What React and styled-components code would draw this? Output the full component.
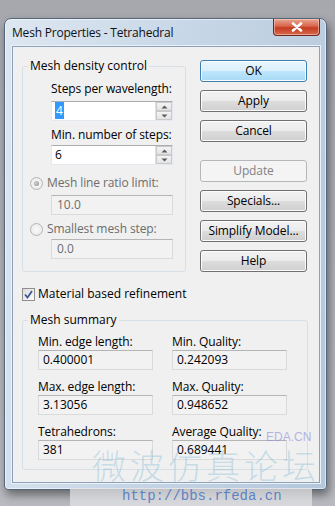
import React from 'react'
import styled, { createGlobalStyle } from 'styled-components'

const GlobalStyle = createGlobalStyle`
  html, body { margin: 0; padding: 0; }
  body {
    background: #aeb0b6;
    font-family: "Open Sans", "Noto Sans", sans-serif;
    font-size: 12px;
    color: #000;
  }
`

const Screen = styled.div`
  position: relative;
  width: 335px;
  height: 506px;
  overflow: hidden;
  box-sizing: border-box;
  padding: 18px 0 0 4px;
  background: linear-gradient(#a6a8ae, #b8bac0);
`

const Window = styled.div`
  width: 323px;
  height: 472px;
  box-sizing: border-box;
  border: 1px solid #56667a;
  border-radius: 7px 7px 4px 4px;
  background: linear-gradient(100deg, #dde7f1 0%, #c8d7e7 45%, #b4c7db 100%);
  box-shadow: inset 0 0 0 1px rgba(255, 255, 255, 0.55), 2px 5px 10px rgba(0, 0, 0, 0.45);
  padding: 0 6px 6px 7px;
  display: flex;
  flex-direction: column;
`

const TitleBar = styled.div`
  height: 27px;
  display: flex;
  justify-content: space-between;
  align-items: flex-start;
`

const Title = styled.div`
  font-size: 12px;
  line-height: 27px;
  color: #111;
  letter-spacing: -0.2px;
`

const CloseButton = styled.div`
  width: 47px;
  height: 17px;
  box-sizing: border-box;
  border: 1px solid #6e2a1f;
  border-top: none;
  border-radius: 0 0 4px 4px;
  background: linear-gradient(#e9a895 0%, #d7644b 45%, #c43c20 55%, #d66a4e 100%);
  box-shadow: inset 0 0 0 1px rgba(255, 220, 210, 0.5);
  display: flex;
  align-items: center;
  justify-content: center;
`

const Client = styled.div`
  flex: 1;
  box-sizing: border-box;
  background: #f0f0f0;
  border: 1px solid #8da2b8;
  box-shadow: 0 0 0 1px #eaf1f8;
  padding: 11px 0 0 9px;
  display: flex;
  flex-direction: column;
`

const TopRow = styled.div`
  display: flex;
  align-items: flex-start;
  gap: 14px;
`

const Group = styled.fieldset`
  margin: 0;
  box-sizing: border-box;
  width: ${p => p.$width}px;
  border: 1px solid #d5dfe5;
  border-radius: 3px;
  padding: ${p => p.$pad};
  display: flex;
  flex-direction: column;
  align-items: flex-start;
`

const Legend = styled.legend`
  padding: 0 2px;
  margin-left: 5px;
  line-height: 16px;
  font-size: 12px;
`

const Label = styled.div`
  line-height: 16px;
  margin: ${p => p.$m || 0};
  color: ${p => (p.$disabled ? '#6d6d6d' : '#000')};
  white-space: nowrap;
  letter-spacing: -0.1px;
`

const TextBox = styled.div`
  box-sizing: border-box;
  width: ${p => p.$w || 122}px;
  height: 20px;
  margin: ${p => p.$m || 0};
  display: flex;
  align-items: stretch;
  background: ${p => (p.$readonly ? '#f2f2f2' : '#fff')};
  border: 1px solid ${p => (p.$readonly ? '#dadada' : '#e3e9ef')};
  border-top-color: ${p => (p.$readonly ? '#b5b5b5' : '#abadb3')};
  color: ${p => (p.$disabled ? '#6d6d6d' : '#000')};
`

const Value = styled.div`
  flex: 1;
  padding-left: ${p => p.$pl || 3}px;
  line-height: 18px;
`

const Selected = styled.span`
  background: #3399ff;
  color: #fff;
  padding: 0 1px;
`

const Spin = styled.div`
  width: 16px;
  display: flex;
  flex-direction: column;
  border-left: 1px solid #e0e0e0;
`

const SpinHalf = styled.div`
  flex: 1;
  display: flex;
  align-items: center;
  justify-content: center;
  background: linear-gradient(#f4f4f4, #e3e3e3);
  border: 1px solid #c9c9c9;
`

const RadioRow = styled.div`
  display: flex;
  align-items: center;
  gap: 4px;
  margin: ${p => p.$m || 0};
  line-height: 16px;
  color: #6d6d6d;
  letter-spacing: -0.1px;
`

const RadioDot = styled.span`
  width: 13px;
  height: 13px;
  box-sizing: border-box;
  border-radius: 50%;
  border: 1px solid #b5b5b5;
  background: radial-gradient(circle, #fafafa 0%, #e6e6e6 100%);
  display: flex;
  align-items: center;
  justify-content: center;
  &::after {
    content: '';
    width: 5px;
    height: 5px;
    border-radius: 50%;
    background: ${p => (p.$checked ? 'radial-gradient(circle at 40% 40%, #d0d0d0, #8d8d8d)' : 'transparent')};
  }
`

const ButtonColumn = styled.div`
  display: flex;
  flex-direction: column;
  margin-top: 2px;
`

const Button = styled.div`
  width: 107px;
  height: 22px;
  box-sizing: border-box;
  margin-top: ${p => p.$gap || 0}px;
  border: 1px solid ${p => (p.$disabled ? '#b4b8bb' : p.$default ? '#3c7fb1' : '#707070')};
  border-radius: 3px;
  background: ${p =>
    p.$disabled
      ? '#f4f4f4'
      : p.$default
      ? 'linear-gradient(#eaf6fd 0%, #d9f0fc 50%, #bee6fd 50%, #a7d9f5 100%)'
      : 'linear-gradient(#f2f2f2 0%, #ebebeb 50%, #dddddd 50%, #cfcfcf 100%)'};
  box-shadow: inset 0 0 0 1px ${p => (p.$disabled ? '#f4f4f4' : '#fcfcfc')};
  color: ${p => (p.$disabled ? '#838383' : '#000')};
  display: flex;
  align-items: center;
  justify-content: center;
  line-height: 16px;
  letter-spacing: -0.1px;
`

const CheckRow = styled.div`
  display: flex;
  align-items: center;
  gap: 3px;
  margin: 14px 0 10px 0;
  line-height: 16px;
`

const CheckBox = styled.span`
  width: 13px;
  height: 13px;
  box-sizing: border-box;
  border: 1px solid #8f8f8f;
  background: linear-gradient(135deg, #dcdcdc, #fdfdfd);
  display: flex;
  align-items: center;
  justify-content: center;
`

const SummaryGrid = styled.div`
  display: grid;
  grid-template-columns: 115px 115px;
  column-gap: 19px;
  row-gap: 9px;
  margin-left: 15px;
`

const Cell = styled.div`
  display: flex;
  flex-direction: column;
`

const Watermark = styled.div`
  position: absolute;
  left: ${p => p.$x}px;
  top: ${p => p.$y}px;
  font-family: ${p => p.$font};
  font-size: ${p => p.$size}px;
  font-weight: ${p => p.$weight || 400};
  color: ${p => p.$color};
  letter-spacing: ${p => p.$ls || 0}px;
  white-space: nowrap;
  pointer-events: none;
  background: ${p => p.$bg || 'transparent'};
  padding: ${p => p.$pad || 0};
`

const Arrow = ({ up }) => (
  <svg width="7" height="4" viewBox="0 0 7 4">
    <path d={up ? 'M0.5 3.5 L3.5 0.5 L6.5 3.5 Z' : 'M0.5 0.5 L3.5 3.5 L6.5 0.5 Z'} fill="#5a5a5a" />
  </svg>
)

const SpinBox = ({ children, m }) => (
  <TextBox $m={m}>
    <Value>{children}</Value>
    <Spin>
      <SpinHalf><Arrow up /></SpinHalf>
      <SpinHalf><Arrow /></SpinHalf>
    </Spin>
  </TextBox>
)

const summary = [
  ['Min. edge length:', '0.400001'],
  ['Min. Quality:', '0.242093'],
  ['Max. edge length:', '3.13056'],
  ['Max. Quality:', '0.948652'],
  ['Tetrahedrons:', '381'],
  ['Average Quality:', '0.689441'],
]

const buttons = [
  { label: 'OK', def: true },
  { label: 'Apply', gap: 8 },
  { label: 'Cancel', gap: 8 },
  { label: 'Update', gap: 18, disabled: true },
  { label: 'Specials...', gap: 8 },
  { label: 'Simplify Model...', gap: 8 },
  { label: 'Help', gap: 8 },
]

export default function App() {
  return (
    <Screen>
      <GlobalStyle />
      <Window>
        <TitleBar>
          <Title>Mesh Properties - Tetrahedral</Title>
          <CloseButton>
            <svg width="12" height="10" viewBox="0 0 12 10">
              <path d="M2 1.5 L10 8.5 M10 1.5 L2 8.5" stroke="#fff" strokeWidth="2.6" strokeLinecap="round" />
            </svg>
          </CloseButton>
        </TitleBar>
        <Client>
          <TopRow>
            <Group $width={164} $pad="0 0 12px 0">
              <Legend>Mesh density control</Legend>
              <Label $m="7px 0 0 28px">Steps per wavelength:</Label>
              <SpinBox m="4px 0 0 28px"><Selected>4</Selected></SpinBox>
              <Label $m="6px 0 0 28px">Min. number of steps:</Label>
              <SpinBox m="2px 0 0 28px">6</SpinBox>
              <RadioRow $m="10px 0 0 7px">
                <RadioDot $checked />
                Mesh line ratio limit:
              </RadioRow>
              <TextBox $m="4px 0 0 28px" $readonly $disabled>
                <Value $pl={5}>10.0</Value>
              </TextBox>
              <RadioRow $m="6px 0 0 7px">
                <RadioDot />
                Smallest mesh step:
              </RadioRow>
              <TextBox $m="2px 0 0 28px" $readonly $disabled>
                <Value $pl={5}>0.0</Value>
              </TextBox>
            </Group>
            <ButtonColumn>
              {buttons.map(b => (
                <Button key={b.label} $gap={b.gap} $default={b.def} $disabled={b.disabled}>
                  {b.label}
                </Button>
              ))}
            </ButtonColumn>
          </TopRow>
          <CheckRow>
            <CheckBox>
              <svg width="9" height="9" viewBox="0 0 9 9">
                <path d="M1 4.5 L3.5 7.5 L8 1" stroke="#3f5897" strokeWidth="1.8" fill="none" />
              </svg>
            </CheckBox>
            Material based refinement
          </CheckRow>
          <Group $width={286} $pad="6px 0 9px 0">
            <Legend>Mesh summary</Legend>
            <SummaryGrid>
              {summary.map(([k, v]) => (
                <Cell key={k}>
                  <Label>{k}</Label>
                  <TextBox $w={115} $readonly>
                    <Value $pl={4}>{v}</Value>
                  </TextBox>
                </Cell>
              ))}
            </SummaryGrid>
          </Group>
        </Client>
      </Window>
      <Watermark $x={266} $y={430} $font='"Liberation Sans", sans-serif' $size={12} $color="rgba(150,150,220,0.7)">
        EDA.CN
      </Watermark>
      <Watermark $x={92} $y={440} $font='"Noto Sans CJK SC", sans-serif' $size={34} $weight={300} $color="rgba(120,180,210,0.35)" $ls={4}>
        微波仿真论坛
      </Watermark>
      <Watermark $x={70} $y={488} $font='"Liberation Mono", monospace' $size={14} $color="rgba(60,110,190,0.8)" $bg="rgba(225,226,228,0.75)" $pad="0 30px 4px 52px">
        http://bbs.rfeda.cn
      </Watermark>
    </Screen>
  )
}
